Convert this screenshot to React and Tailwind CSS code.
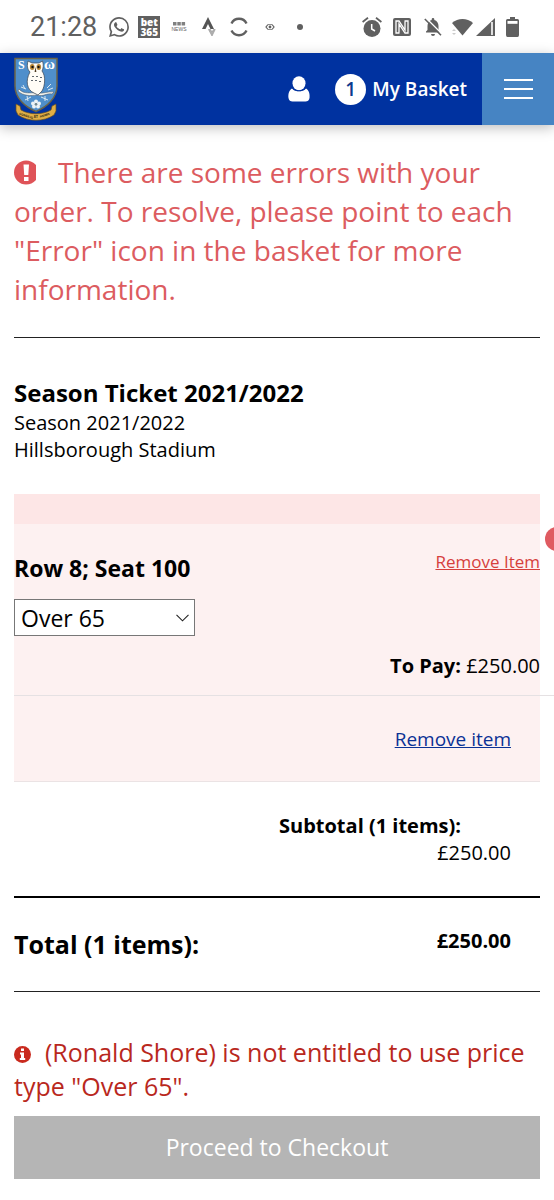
function Crest() {
  return (
    <svg width="44" height="64" viewBox="0 0 44 64" role="img" aria-label="Sheffield Wednesday crest">
      <path d="M1 1.500H43V29C43 41 33 50 22 54.500C11 50 1 41 1 29Z" fill="#4f8fcb" stroke="#6b6448" strokeWidth="1.500" />
      <text x="4" y="12" fontFamily="Liberation Serif, serif" fontWeight="700" fontSize="12" fill="#fff">S</text>
      <text x="30" y="12" fontFamily="Liberation Serif, serif" fontWeight="700" fontSize="15" fill="#fff">ω</text>
      <g stroke="#dbe8f0" strokeWidth="1" fill="none">
        <path d="M7 30L12 32M9 28L11 32M33 31L37 27M34 33L39 31M11 43L17 40M13 39L14 44M27 40L34 43M31 39L31 44" />
      </g>
      <path d="M5 32C10 38 17 35 23 36C30 37 34 34 40 35L38 37C32 36 30 40 23 38C17 39 9 39 4 34Z" fill="#f5f5ef" stroke="#4b5560" strokeWidth="0.500" />
      <path d="M14 4L18 6H25L28.500 4C30 8 29 12 28 14C32 19 31 29 28 34L24 38L20 36C13 33 11 24 16 15C13 12 13 8 14 4Z" fill="#fffdf6" stroke="#374250" strokeWidth="0.700" />
      <ellipse cx="18.200" cy="10" rx="2.300" ry="3" fill="#b78635" />
      <ellipse cx="24.800" cy="10" rx="2.300" ry="3" fill="#b78635" />
      <circle cx="18.500" cy="10" r="1.200" fill="#111" />
      <circle cx="24.500" cy="10" r="1.200" fill="#111" />
      <path d="M21.500 10L20.600 15H22.400Z" fill="#4a3a20" />
      <path d="M18 19l1 1 1-1M22 19l1 1 1-1M26 20l1 1 1-1M17 23l1 1 1-1M21 23l1 1 1-1M25 24l1 1 1-1" fill="none" stroke="#36414b" strokeWidth="0.800" />
      <g fill="#edf3f5">
        <circle cx="22" cy="44.500" r="2" />
        <circle cx="25" cy="46.500" r="2" />
        <circle cx="24" cy="49.500" r="2" />
        <circle cx="20" cy="49.500" r="2" />
        <circle cx="19" cy="46.500" r="2" />
      </g>
      <circle cx="22" cy="47.300" r="1.200" fill="#788" />
      <path d="M2 47L6 49L7 53C16 58 28 58 37 53L38 49L42 47V54L40 58C30 65 14 65 4 58L2 54Z" fill="#e0ae45" stroke="#614d22" strokeWidth="0.700" />
      <g fontFamily="Liberation Sans, sans-serif" fontWeight="700" fontSize="3" fill="#241b0c">
        <text x="5" y="57.500" transform="rotate(18 5 57.500)">CONSILIO</text>
        <text x="20" y="61">ET</text>
        <text x="26" y="60.800" transform="rotate(-18 26 60.800)">ANIMIS</text>
      </g>
    </svg>
  );
}

function StatusBar() {
  return (
    <div className="flex h-[53px] items-center justify-between pr-[35px] pl-[30px] text-[#606060]">
      <div className="flex items-center">
        <time className="font-[Roboto,sans-serif] text-[27px] leading-8">21:28</time>
        <svg className="ml-3" width="20" height="20" viewBox="0 0 24 24" fill="currentColor" aria-hidden="true">
          <path d="M17.472 14.382c-.297-.149-1.758-.867-2.030-.967-.273-.099-.471-.148-.670.150-.197.297-.767.966-.940 1.164-.173.199-.347.223-.644.075-.297-.150-1.255-.463-2.390-1.475-.883-.788-1.480-1.761-1.653-2.059-.173-.297-.018-.458.130-.606.134-.133.298-.347.446-.520.149-.174.198-.298.298-.497.099-.198.050-.371-.025-.520-.075-.149-.669-1.612-.916-2.207-.242-.579-.487-.500-.669-.510-.173-.008-.371-.010-.570-.010-.198 0-.520.074-.792.372-.272.297-1.040 1.016-1.040 2.479 0 1.462 1.065 2.875 1.213 3.074.149.198 2.096 3.200 5.077 4.487.709.306 1.262.489 1.694.625.712.227 1.360.195 1.871.118.571-.085 1.758-.719 2.006-1.413.248-.694.248-1.289.173-1.413-.074-.124-.272-.198-.570-.347M12.050 21.785a9.870 9.870 0 0 1-5.031-1.378l-.361-.214-3.741.982.998-3.648-.235-.374a9.860 9.860 0 0 1-1.510-5.260c.001-5.450 4.436-9.884 9.888-9.884a9.890 9.890 0 0 1 9.884 9.892c-.003 5.450-4.437 9.884-9.892 9.884m8.413-18.297A11.815 11.815 0 0 0 12.050 0C5.495 0 .160 5.335.157 11.892c0 2.096.547 4.142 1.588 5.945L.057 24l6.305-1.654a11.882 11.882 0 0 0 5.683 1.448c6.554 0 11.890-5.335 11.893-11.893a11.821 11.821 0 0 0-3.475-8.413" />
        </svg>
        <span className="ml-[9px] flex size-[22px] flex-col items-center justify-center bg-[#606060] text-[10px] leading-[10px] font-extrabold text-white">
          <span>bet</span>
          <span>365</span>
        </span>
        <svg className="ml-[11px]" width="16" height="11" viewBox="0 0 16 11" role="img" aria-label="BBC News">
          <path d="M2 1H5.500V4.500H2ZM6.300 1H9.800V4.500H6.300ZM10.600 1H14.100V4.500H10.600Z" fill="#808080" />
          <text x="8" y="10" textAnchor="middle" fontFamily="Liberation Sans, sans-serif" fontSize="5" fill="#606060">NEWS</text>
        </svg>
        <svg className="ml-[15px]" width="14" height="20" viewBox="0 0 14 20" aria-hidden="true">
          <path d="M6 0L0 12H3.500L6 7L8.500 12H12Z" fill="#555" />
          <path d="M6.500 12.500H8.500L10 15L11.500 12.500H13.200L10 19Z" fill="#b0b0b0" stroke="#999" strokeWidth="0.700" />
        </svg>
        <svg className="ml-[14px]" width="18" height="20" viewBox="0 0 18 20" fill="none" stroke="currentColor" strokeWidth="2.400" aria-hidden="true">
          <path d="M1.500 6.500A8.300 8.300 0 0 1 16.500 6.500M1.500 13.500A8.300 8.300 0 0 0 16.500 13.500" />
        </svg>
        <svg className="ml-[17px]" width="10" height="8" viewBox="0 0 10 8" fill="none" stroke="currentColor" aria-hidden="true">
          <path d="M3 1.500L1 4L3 6.500M7 1.500L9 4L7 6.500" strokeWidth="1.200" />
          <path d="M3 1.500H7M3 6.500H7" strokeWidth="0.700" />
          <circle cx="5" cy="4" r="1.400" fill="currentColor" stroke="none" />
        </svg>
        <span className="ml-[22px] size-[6px] rounded-full bg-[#606060]" />
      </div>
      <div className="flex items-center">
        <svg width="20" height="20" viewBox="0 0 20 20" fill="none" stroke="currentColor" aria-hidden="true">
          <circle cx="10" cy="11.500" r="8.500" fill="currentColor" stroke="none" />
          <path d="M.6 5L6 .8M19.400 5L14 .8" strokeWidth="1.800" />
          <path d="M9.700 7V12L13 14" stroke="#fff" strokeWidth="1.500" />
        </svg>
        <svg className="ml-[11px]" width="18" height="18" viewBox="0 0 18 18" aria-hidden="true">
          <rect width="18" height="18" rx="2" fill="currentColor" />
          <path d="M6.500 15H3V3H6L12 12V3.500M11.500 3H15V15H12L6 6V14.500" fill="none" stroke="#fff" strokeWidth="1.300" />
        </svg>
        <svg className="ml-[13px]" width="18" height="20" viewBox="0 0 18 20" aria-hidden="true">
          <path d="M9 1C9.800 1 10.300 1.600 10.300 2.300V3C13 3.700 14.500 6 14.500 9V13L16.500 15.500H2V14.500L3.500 13V9C3.500 6 5 3.700 7.700 3V2.300C7.700 1.600 8.200 1 9 1ZM7 17H11A2 2 0 0 1 7 17Z" fill="currentColor" />
          <path d="M2 1L18 17" stroke="#fff" strokeWidth="1.500" />
          <path d="M.8 2L17 18.200" stroke="currentColor" strokeWidth="1.600" />
        </svg>
        <svg className="ml-[10px]" width="21" height="18" viewBox="0 0 21 18" fill="currentColor" aria-hidden="true">
          <path d="M0 5C6-.5 15-.5 21 5L10.500 17.500Z" />
          <path d="M0 13L2 11L4 13ZM0 15L2 17L4 15Z" fill="#ccc" />
        </svg>
        <svg className="ml-[3px]" width="19" height="18" viewBox="0 0 19 18" aria-hidden="true">
          <path d="M0 18L19 0V18Z" fill="currentColor" />
          <path d="M16 4V17" stroke="#fff" strokeWidth="1.600" />
        </svg>
        <svg className="ml-[11px]" width="13" height="20" viewBox="0 0 13 20" aria-hidden="true">
          <path d="M4 0H9V2H11.500Q13 2 13 3.500V18Q13 20 11.500 20H1.500Q0 20 0 18V3.500Q0 2 1.500 2H4Z" fill="currentColor" />
          <rect x="1.500" y="4" width="10" height="2.800" fill="#fff" />
        </svg>
      </div>
    </div>
  );
}

function Header() {
  return (
    <header className="flex h-[72px] items-stretch bg-[#0032a0] text-white shadow-[0_3px_12px_rgba(0,0,0,0.25)]">
      <a href="#home" className="flex items-center pl-[14px]">
        <Crest />
      </a>
      <nav className="ml-auto flex items-stretch">
        <a href="#account" aria-label="My account" className="mr-[25px] flex items-center">
          <svg width="22" height="26" viewBox="0 0 22 26" fill="currentColor" aria-hidden="true">
            <path d="M4 12.500C6 15 8.500 15.200 11 15.200S16 15 18 12.500C21 14 22 18.500 21.500 22C21.200 24.500 19.500 25.500 17.500 25.500H4.500C2.500 25.500.8 24.500.5 22C0 18.500 1 14 4 12.500Z" />
            <ellipse cx="11" cy="7.200" rx="6.500" ry="7" />
            <path d="M4.500 12.300C7.500 15.600 14.500 15.600 17.500 12.300" fill="none" stroke="#0032a0" strokeWidth="0.700" />
          </svg>
        </a>
        <a href="#basket" className="mr-[15px] flex items-center gap-[6px] text-[19px] font-semibold">
          <span className="flex size-[31px] items-center justify-center rounded-full bg-white text-[#0d3a8e]">1</span>
          My Basket
        </a>
        <button type="button" aria-label="Menu" className="flex w-[72px] items-center justify-center bg-[#4684c3]">
          <span className="flex w-[29px] flex-col gap-[7px]">
            <span className="h-[2px] bg-white" />
            <span className="h-[2px] bg-white" />
            <span className="h-[2px] bg-white" />
          </span>
        </button>
      </nav>
    </header>
  );
}

export default function App() {
  return (
    <div className="overflow-hidden bg-white font-['Open_Sans',sans-serif] text-[20px] leading-[27px] text-black">
      <StatusBar />
      <Header />
      <main className="px-[14px] pb-5">
        <p role="alert" className="border-b border-[#222] pt-7 pb-7 text-[28px] leading-[39px] text-[#dc5c60]">
          <svg className="mr-5 inline-block align-[-2px]" width="24" height="25" viewBox="0 0 24 25" aria-hidden="true">
            <path d="M12 .5C16 .5 19 2 22 5V20C19 23 16 24.500 12 24.500A12 12 0 0 1 12 .5Z" fill="#df5358" />
            <path d="M9.500 4.500H15L14.300 15H10.200ZM10 17H14.500V21H10Z" fill="#fff" />
          </svg>
          There are some errors with your order. To resolve, please point to each "Error" icon in the basket for more information.
        </p>

        <section className="pt-[39px] pb-[31px]">
          <h2 className="text-[24px] leading-8 font-bold">Season Ticket 2021/2022</h2>
          <p>Season 2021/2022</p>
          <p>Hillsborough Stadium</p>
        </section>

        <section className="bg-[#fdf1f1]">
          <div className="relative h-[30px] bg-[#fde6e6]">
            <span className="absolute top-[33px] -right-[29px] size-6 rounded-full bg-[#df5b61]" />
          </div>
          <div className="-mr-[14px] border-b border-[#e5e1e3] pt-6 pr-[14px] pb-4">
            <div className="flex items-start justify-between">
              <h3 className="pt-1 text-[23px] leading-8 font-bold">Row 8; Seat 100</h3>
              <a href="#remove" className="text-[17px] text-[#d6403c] underline">Remove Item</a>
            </div>
            <div className="relative mt-[15px] w-[181px]">
              <select aria-label="Price type" defaultValue="Over 65" className="h-[37px] w-full appearance-none border border-[#777] bg-white pl-[6px] text-[23px] leading-8 text-black">
                <option>Over 65</option>
                <option>Adult</option>
              </select>
              <svg className="pointer-events-none absolute top-[15px] right-[6px]" width="13" height="8" viewBox="0 0 13 8" fill="none" stroke="#222" strokeWidth="1.100" aria-hidden="true">
                <path d="M.5 .8L6.500 6.800L12.500 .8" />
              </svg>
            </div>
            <p className="mt-4 text-right">
              <strong>To Pay:</strong> £250.00
            </p>
          </div>
          <div className="border-b border-[#ebe3e4] pt-[29px] pr-[29px] pb-7 text-right">
            <a href="#remove-item" className="text-[19px] text-[#0b3295] underline">Remove item</a>
          </div>
        </section>

        <div className="border-b-2 border-black pt-[30px] pr-[29px] pb-[30px] text-right">
          <p className="pr-[50px] font-bold">Subtotal (1 items):</p>
          <p>£250.00</p>
        </div>
        <div className="flex items-start justify-between border-b border-[#222] pt-[29px] pr-[29px] pb-[29px] font-bold">
          <span className="pb-[2px] pt-px text-[25px] leading-8">Total (1 items):</span>
          <span>£250.00</span>
        </div>

        <p role="alert" className="pt-[43px] text-[25px] leading-[34px] text-[#b9281d]">
          <svg className="mr-[14px] inline-block align-[-1px]" width="17" height="17" viewBox="0 0 17 17" aria-hidden="true">
            <circle cx="8.500" cy="8.500" r="8.500" fill="#c92a1e" />
            <path d="M7 2.500H10V5H7ZM6 6.500H10V12H11.200V14H5.800V12H7V8.500H6Z" fill="#fff" />
          </svg>
          (Ronald Shore) is not entitled to use price type "Over 65".
        </p>
        <button type="button" className="mt-[13px] h-[63px] w-full bg-[#b5b5b5] text-[23px] text-white">Proceed to Checkout</button>
      </main>
    </div>
  );
}
